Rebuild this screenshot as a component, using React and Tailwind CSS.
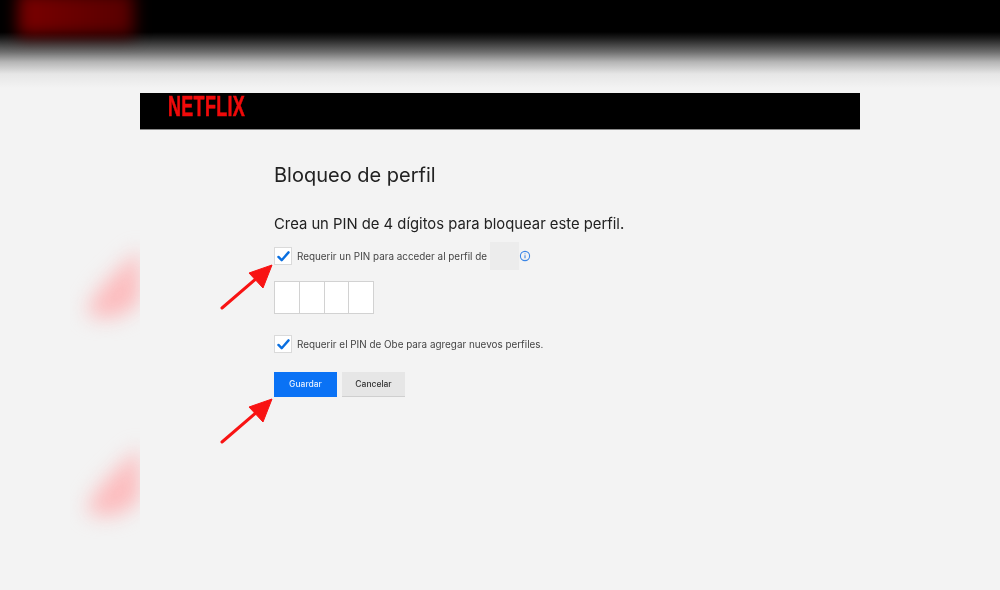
const font = "font-['Inter','Liberation_Sans',sans-serif]";

function Checkbox() {
  return (
    <span className="flex h-[18px] w-[18px] shrink-0 items-center justify-center border border-[#dadada] bg-white">
      <svg width="13" height="11" viewBox="0 0 14 12" fill="none">
        <path d="M1.5 6.5 L5 10 L12.5 1.5" stroke="#0a6fe0" strokeWidth="2.6" strokeLinecap="round" strokeLinejoin="round" />
      </svg>
    </span>
  );
}

function Arrow({ className }) {
  return (
    <svg className={className} width="54" height="46" viewBox="0 0 54 46" fill="none">
      <path d="M2 44 L38 13" stroke="#f81313" strokeWidth="3" strokeLinecap="round" />
      <path d="M52 1 L29 9 L43 24 Z" fill="#f81313" stroke="#f81313" strokeLinejoin="round" />
    </svg>
  );
}

function BlurredPetal({ className }) {
  return (
    <div className={`absolute h-[120px] w-[70px] overflow-hidden ${className}`}>
      <div className="h-full w-full blur-[10px]">
        <svg width="70" height="120" viewBox="0 0 70 120" fill="none">
          <path d="M74 16 C56 38 32 50 16 84 C36 98 62 86 74 68 Z" fill="#fcbcbe" />
        </svg>
      </div>
    </div>
  );
}

export default function App() {
  return (
    <div className={`relative flex h-[590px] w-[1000px] flex-col overflow-hidden bg-[#f3f3f3] ${font}`}>
      {/* blurred backdrop */}
      <div className="relative h-[93px] shrink-0 overflow-hidden bg-[linear-gradient(to_bottom,#000_0px,#000_32px,#1c1c1c_38px,#6e6e6e_52px,#b5b5b5_62px,#e6e6e6_74px,#f3f3f3_88px)]">
        <div className="absolute left-[18px] top-[-8px] h-[44px] w-[116px] bg-[linear-gradient(to_right,#7a0000,#560000)] blur-[8px]" />
      </div>
      <BlurredPetal className="left-[70px] top-[228px]" />
      <BlurredPetal className="left-[70px] top-[426px]" />

      <div className="mx-auto flex w-[720px] flex-col">
        <header className="flex h-[37px] items-start border-b border-[#8a8a8a] bg-black pl-[28px] blur-[0.3px]">
          <span className="mt-[-3px] origin-left scale-x-[0.6] whitespace-nowrap font-['Liberation_Sans',sans-serif] text-[30px] font-bold leading-[32px] tracking-[0.5px] text-[#f00a0a] [-webkit-text-stroke:0.6px_#f00a0a]">
            NETFLIX
          </span>
        </header>

        <main className="flex flex-col pl-[134px] blur-[0.4px]">
          <h1 className="mt-[31px] text-[20px] font-normal leading-[28px] text-[#222]">Bloqueo de perfil</h1>
          <p className="mt-[24px] whitespace-nowrap text-[14.8px] leading-[22px] text-[#222]">
            Crea un PIN de 4 dígitos para bloquear este perfil.
          </p>

          <div className="mt-[7px] flex h-[28px] items-center">
            <Checkbox />
            <span className="ml-[5px] w-[193px] whitespace-nowrap text-[9.9px] text-[#444]">
              Requerir un PIN para acceder al perfil de
            </span>
            <span className="h-[28px] w-[29px] bg-[#ececec]" />
            <svg width="12" height="12" viewBox="0 0 12 12" fill="none">
              <circle cx="6" cy="6" r="4.6" stroke="#3b86e6" strokeWidth="1.1" />
              <path d="M6 5.2 V8.2 M6 3.4 V4.2" stroke="#3b86e6" strokeWidth="1.1" />
            </svg>
          </div>

          <div className="mt-[11px] flex h-[33px] w-[100px] border border-[#d2d2d2] bg-white">
            <span className="flex-1 border-r border-[#d2d2d2]" />
            <span className="flex-1 border-r border-[#d2d2d2]" />
            <span className="flex-1 border-r border-[#d2d2d2]" />
            <span className="flex-1" />
          </div>

          <div className="mt-[21px] flex h-[18px] items-center">
            <Checkbox />
            <span className="ml-[5px] whitespace-nowrap text-[9.9px] text-[#444]">
              Requerir el PIN de Obe para agregar nuevos perfiles.
            </span>
          </div>

          <div className="mt-[19px] flex gap-[5px]">
            <button className="h-[25px] w-[63px] bg-[#0a72f5] text-[8.5px] font-medium text-[#e4efff]">Guardar</button>
            <button className="h-[25px] w-[63px] border-b border-[#cfcfcf] bg-[#e6e6e6] text-[8.5px] font-medium text-[#333]">
              Cancelar
            </button>
          </div>
        </main>
      </div>

      <Arrow className="absolute left-[220px] top-[264px]" />
      <Arrow className="absolute left-[220px] top-[398px]" />
    </div>
  );
}
